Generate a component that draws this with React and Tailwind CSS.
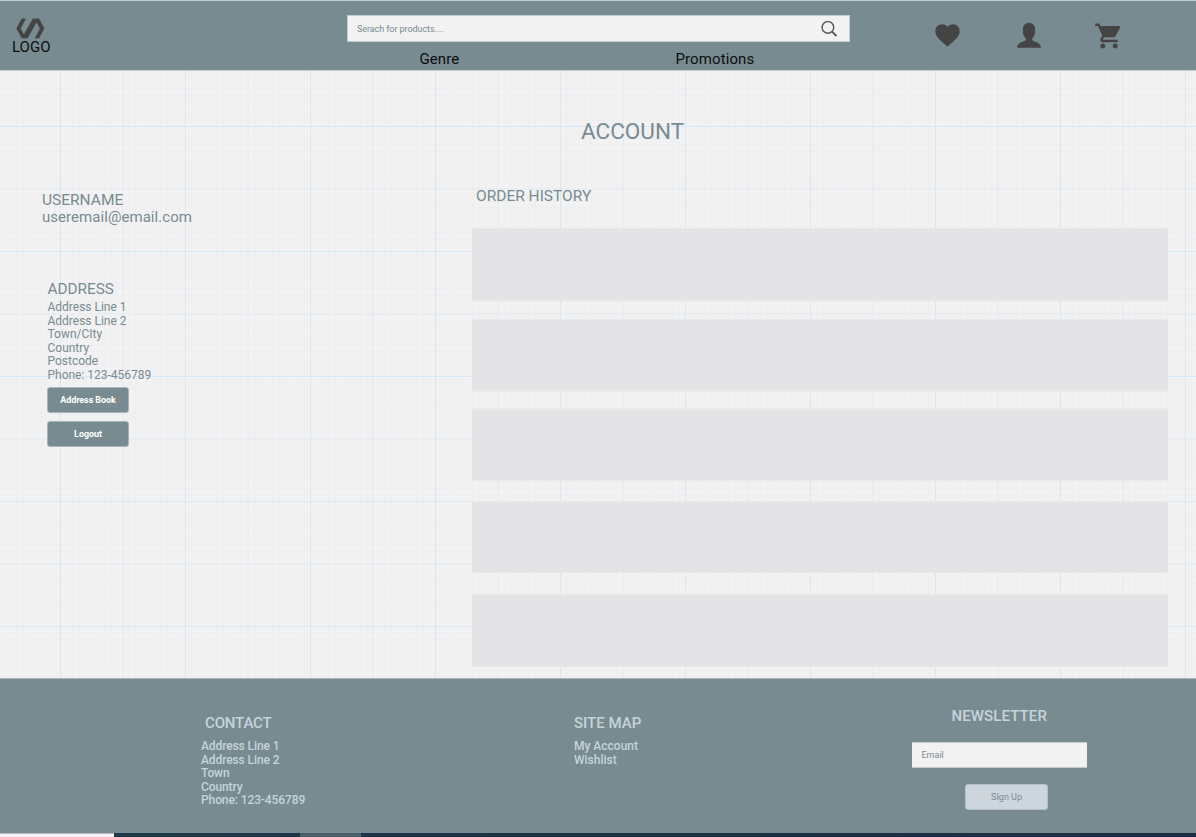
import React from "react";
import { MdShoppingCart } from "react-icons/md";

const GRID =
  "bg-[#f2f2f3] bg-[linear-gradient(to_right,#d8e7f4_1px,transparent_1px),linear-gradient(to_bottom,#d8e7f4_1px,transparent_1px),linear-gradient(to_right,#e3eaf1_1px,transparent_1px),linear-gradient(to_bottom,#e3eaf1_1px,transparent_1px),linear-gradient(to_right,#edeef0_1px,transparent_1px),linear-gradient(to_bottom,#edeef0_1px,transparent_1px)] bg-size-[125px_125px,125px_125px,62.5px_62.5px,62.5px_62.5px,6.25px_6.25px,6.25px_6.25px] bg-position-[60px_55px,60px_55px,60px_55px,60px_55px,60px_55px,60px_55px]";

function Logo() {
  return (
    <svg className="block h-[21px] w-[29px]" viewBox="0 0 29 21" fill="#444445">
      <path d="M5.700 .4H10L4.700 10.400 7.900 16.300 16.900 .4H23L28.400 10.400 23 20.300H18.700L23.900 10.400 20.600 4.400 11.600 20.300H5.700L.3 10.400Z" />
    </svg>
  );
}

function SearchIcon() {
  return (
    <svg className="h-4 w-4" viewBox="0 0 16 16" fill="none" stroke="#555657" strokeWidth="1.4">
      <circle cx="6.900" cy="6.400" r="5.800" />
      <path d="M11.100 10.600 15.400 15" strokeWidth="1.800" />
    </svg>
  );
}

function Heart() {
  return (
    <svg className="block h-[23px] w-[25px]" viewBox="0 0 25 23" fill="#444445">
      <path d="M12.500 22.800 10.600 21.100C4.300 15.500.3 12 .3 7 .3 3.100 3.300.2 7.100.2c2.200 0 4.200 1 5.400 2.800C13.700 1.200 15.700.2 17.900.2c3.800 0 6.800 2.900 6.800 6.800 0 5-4 8.500-10.300 14.100Z" />
    </svg>
  );
}

function Person() {
  return (
    <svg className="block h-[25px] w-[24px]" viewBox="0 0 24 25" fill="#444445">
      <path d="M12 .1C8.300.1 5.700 2.400 5.900 6.500c0 .8.1 1.400.2 1.900-.6.300-.4 1.500.3 2.500.3 2.200 1.200 3.200 2.200 4.400.4.700.3 1.700-.2 2.100C6.300 18.800.1 19.100.1 24.800H23.900c0-5.700-6.200-6-8.300-7.400-.5-.4-.6-1.400-.2-2.100 1-1.200 1.900-2.200 2.200-4.400.7-1 .9-2.200.3-2.500.1-.5.2-1.100.2-1.900C18.300 2.400 15.700.1 12 .1Z" />
    </svg>
  );
}

function Lines({ items, className }) {
  return (
    <ul className={className}>
      {items.map((t) => (
        <li key={t}>{t}</li>
      ))}
    </ul>
  );
}

export default function App() {
  return (
    <div className="flex h-[837px] w-[1196px] flex-col overflow-hidden font-['Roboto',sans-serif] whitespace-nowrap text-[#788b90]">
      <header className="flex h-[71px] shrink-0 border-t border-b border-[#c3cccf] bg-[#788b90] text-[#0c0e0e]">
        <div className="w-[347px] pt-[17px] pl-3">
          <div className="pl-1"><Logo /></div>
          <div className="text-[15px] leading-[16px]">LOGO</div>
        </div>
        <div className="w-[504px] pt-[14px]">
          <div className="flex h-[27px] w-[503px] items-center justify-between border border-[#c3cccf] bg-[#f2f2f2] pr-3 pl-[9px]">
            <span className="pt-[2px] text-[9px] tracking-[-0.07px] text-[#788b90]">Serach for products....</span>
            <SearchIcon />
          </div>
          <nav className="flex pt-[8px] pl-[72.500px] text-[15px] leading-[18px] tracking-[0.1px]">
            <a className="w-[256px]">Genre</a>
            <a>Promotions</a>
          </nav>
        </div>
        <div className="flex pt-[22px] pl-[84px]">
          <div className="w-[82px] pt-[1px]"><Heart /></div>
          <div className="w-[77px]"><Person /></div>
          <MdShoppingCart className="-mt-[2px] h-[30px] w-[30px] text-[#444445]" />
        </div>
      </header>

      <main className={`h-[607px] shrink-0 ${GRID}`}>
        <h1 className="h-[114px] pt-[46px] pl-[581px] text-[22.500px] leading-[28px]">ACCOUNT</h1>
        <div className="flex">
          <aside className="w-[472px] pt-[7px] pl-[42px]">
            <div className="text-[15.500px] leading-[17px]">USERNAME</div>
            <div className="text-[15px] leading-[17px] tracking-[0.050px]">useremail@email.com</div>
            <div className="pt-[55px] pl-[5px]">
              <h2 className="pl-[0.500px] text-[15.300px] leading-[17px]">ADDRESS</h2>
              <Lines
                className="pt-[3px] pl-[0.500px] text-[12px] leading-[13.5px] tracking-[-0.01px]"
                items={["Address Line 1", "Address Line 2", "Town/CIty", "Country", "Postcode", "Phone: 123-456789"]}
              />
              <div className="flex flex-col gap-2 pt-[5px] text-[9px] font-bold tracking-[-0.07px] text-white">
                <button className="h-[26px] w-[82px] rounded-[3px] border border-[#a9b5b9] bg-[#788b90] pt-px">Address Book</button>
                <button className="h-[26px] w-[82px] rounded-[3px] border border-[#a9b5b9] bg-[#788b90] pt-px">Logout</button>
              </div>
            </div>
          </aside>
          <section className="w-[696px]">
            <h2 className="h-[43px] pt-[3px] pl-1 text-[15.500px] leading-[17px]">ORDER HISTORY</h2>
            <div className="h-[73px] border-y border-[#e9e9ea] bg-[#e4e4e6]" />
            <div className="mt-[18px] h-[73px] border-y border-[#e9e9ea] bg-[#e4e4e6]" />
            <div className="mt-[16px] h-[73px] border-y border-[#e9e9ea] bg-[#e4e4e6]" />
            <div className="mt-[20px] h-[72px] border-y border-[#e9e9ea] bg-[#e4e4e6]" />
            <div className="mt-[21px] h-[73px] border-y border-[#e9e9ea] bg-[#e4e4e6]" />
          </section>
        </div>
      </main>

      <footer className="flex h-[155px] shrink-0 border-t border-[#a9b5b9] bg-[#788b90] text-[#c5d4db]">
        <div className="w-[574px] pt-[36px] pl-[201px]">
          <h2 className="pl-1 text-[15px] leading-[17px] font-medium tracking-[-0.15px]">CONTACT</h2>
          <Lines
            className="pt-[8px] text-[12px] leading-[13.5px] font-medium tracking-[-0.1px]"
            items={["Address Line 1", "Address Line 2", "Town", "Country", "Phone: 123-456789"]}
          />
        </div>
        <div className="w-[338px] pt-[36px]">
          <h2 className="text-[15px] leading-[17px] font-medium">SITE MAP</h2>
          <Lines className="pt-[8px] text-[12px] leading-[13.5px] font-medium" items={["My Account", "Wishlist"]} />
        </div>
        <div className="w-[175px] pt-[29px]">
          <h2 className="pl-[39.500px] text-[15px] leading-[17px] font-medium tracking-[0.1px]">NEWSLETTER</h2>
          <div className="mt-[17px] flex h-[26px] items-center border-y border-[#c3cccf] bg-[#f2f2f2] pt-[2px] pl-[9.5px] text-[9px] text-[#788b90]">Email</div>
          <button className="mt-[16px] ml-[53px] block h-[26px] w-[83px] rounded-[3px] border border-[#b5c1c6] bg-[#ced6dd] pt-px text-[9px] text-[#788b90]">SIgn Up</button>
        </div>
      </footer>
      <div className="flex h-1 shrink-0 bg-linear-to-r from-[#203a46] to-[#1b2b45]">
        <div className="w-[114px] border-t border-[#b9bcc2] bg-[#f5f2f4]" />
        <div className="ml-[186px] w-[61px] bg-[#4b5f69]" />
      </div>
    </div>
  );
}
